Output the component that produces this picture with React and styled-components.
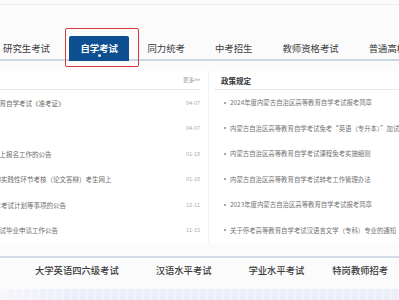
import React from "react";
import styled, { createGlobalStyle } from "styled-components";

const GlobalStyle = createGlobalStyle`
  html, body {
    margin: 0;
    padding: 0;
    background: #fbfbfc;
  }
  body {
    font-family: "Noto Sans CJK SC", "Noto Sans", sans-serif;
  }
`;

const tabs = ["研究生考试", "自学考试", "同力统考", "中考招生", "教师资格考试", "普通高校招生"];

const news = [
  { title: "关于打印高等教育自学考试《准考证》", date: "04-07" },
  { title: "关于考试的通知", date: "04-07" },
  { title: "关于做好自考网上报名工作的公告", date: "01-18" },
  { title: "关于2024年度的实践性环节考核（论文答辩）考生网上", date: "01-18" },
  { title: "关于公布2025年考试计划等事项的公告", date: "12-11" },
  { title: "关于开展自学考试毕业申请工作公告", date: "11-15" },
];

const policies = [
  "2024年度内蒙古自治区高等教育自学考试报考简章",
  "内蒙古自治区高等教育自学考试免考“英语（专升本）”加试的通知",
  "内蒙古自治区高等教育自学考试课程免考实施细则",
  "内蒙古自治区高等教育自学考试转考工作管理办法",
  "2023年度内蒙古自治区高等教育自学考试报考简章",
  "关于停考高等教育自学考试汉语言文学（专科）专业的通知",
];

const links = ["大学英语四六级考试", "汉语水平考试", "学业水平考试", "特岗教师招考"];

const App = () => {
  return (
    <>
      <GlobalStyle />
      <Page>
        <TopLine />
        <TabBar>
          {tabs.map((t, i) => (
            <Tab key={t} $active={i === 1}>
              {t}
              {i === 1 && <Highlight />}
            </Tab>
          ))}
        </TabBar>

        <Body>
          <LeftPanel>
            <PanelHead>
              <span />
              <More>更多&gt;&gt;</More>
            </PanelHead>
            {news.map((n) => (
              <NewsRow key={n.title}>
                <NewsTitle>{n.title}</NewsTitle>
                <NewsDate>{n.date}</NewsDate>
              </NewsRow>
            ))}
          </LeftPanel>
          <RightPanel>
            <PanelHead>
              <HeadTitle>政策规定</HeadTitle>
            </PanelHead>
            {policies.map((p) => (
              <PolicyRow key={p}>
                <Bullet />
                {p}
              </PolicyRow>
            ))}
          </RightPanel>
        </Body>

        <BottomNav>
          {links.map((l, i) => (
            <NavLink key={l} $tight={i === 3}>
              {l}
            </NavLink>
          ))}
        </BottomNav>
        <Strip />
      </Page>
    </>
  );
};

const Page = styled.div`
  width: 399px;
  height: 300px;
  overflow: hidden;
  background: #fbfbfc;
`;

const TopLine = styled.div`
  height: 4px;
  border-bottom: 1px solid #eceef1;
  margin-bottom: 31px;
`;

const TabBar = styled.div`
  display: flex;
  margin-left: -12px;
  height: 23px;
  border-bottom: 2px solid #cdd5de;
  white-space: nowrap;
`;

const Tab = styled.div`
  position: relative;
  display: flex;
  align-items: center;
  justify-content: center;
  flex: none;
  font-size: 9.4px;
  color: #3a3a3a;
  padding: 0 15px;
  ${(p) =>
    p.$active &&
    `
    margin: 0 3px -2px 4px;
    padding: 0 11.5px 2px;
    background: #0d4f91;
    color: #fff;
    font-weight: 700;
    border-radius: 2px 2px 0 0;
    &::after {
      content: "";
      position: absolute;
      left: 50%;
      bottom: 4px;
      width: 3px;
      height: 3px;
      margin-left: -1.5px;
      border-radius: 50%;
      background: #dfe8f3;
    }
  `}
`;

const Highlight = styled.span`
  position: absolute;
  left: -4px;
  right: -10px;
  top: -8px;
  bottom: -6px;
  border: 1.5px solid #d8393a;
  border-radius: 2px;
`;

const Body = styled.div`
  display: flex;
  margin-left: -56px;
  margin-top: 10px;
`;

const LeftPanel = styled.div`
  flex: none;
  width: 246px;
  padding: 0 8px 0 10px;
  border-right: 1px solid #f0f1f4;
  background: #fff;
`;

const RightPanel = styled.div`
  flex: none;
  width: 260px;
  padding-left: 5px;
  background: #fff;
`;

const PanelHead = styled.div`
  display: flex;
  align-items: center;
  justify-content: space-between;
  height: 18px;
  border-bottom: 1px solid #e6e9ed;
  padding-left: 7px;
`;

const HeadTitle = styled.span`
  font-size: 7.5px;
  font-weight: 700;
  color: #333;
`;

const More = styled.span`
  font-size: 5.5px;
  color: #999;
`;

const NewsRow = styled.div`
  display: flex;
  align-items: center;
  justify-content: space-between;
  height: 25.5px;
  white-space: nowrap;
`;

const NewsTitle = styled.span`
  font-size: 6.5px;
  color: #6c6c6c;
`;

const NewsDate = styled.span`
  font-size: 5.5px;
  color: #aaa;
`;

const PolicyRow = styled.div`
  display: flex;
  align-items: center;
  height: 25.5px;
  padding-left: 10px;
  font-size: 6.4px;
  color: #737373;
  white-space: nowrap;
`;

const Bullet = styled.span`
  width: 2px;
  height: 2px;
  border-radius: 50%;
  background: #888;
  margin-right: 4px;
  flex: none;
`;

const BottomNav = styled.div`
  display: flex;
  align-items: center;
  gap: 37px;
  margin-top: 13px;
  height: 24px;
  padding-left: 35px;
  border-top: 2px solid #d3dce5;
  white-space: nowrap;
`;

const NavLink = styled.span`
  font-size: 9.3px;
  color: #3a3a3a;
  font-weight: 500;
  margin-left: ${(p) => (p.$tight ? "-9px" : "0")};
`;

const Strip = styled.div`
  margin-top: 7px;
  height: 20px;
  background: repeating-linear-gradient(
      90deg,
      rgba(255, 255, 255, 0) 0 6px,
      rgba(255, 255, 255, 0.35) 6px 8px
    ),
    linear-gradient(90deg, #f6f6fb 0, #eceefa 70px, #eceefa 100%);
`;

export default App;
